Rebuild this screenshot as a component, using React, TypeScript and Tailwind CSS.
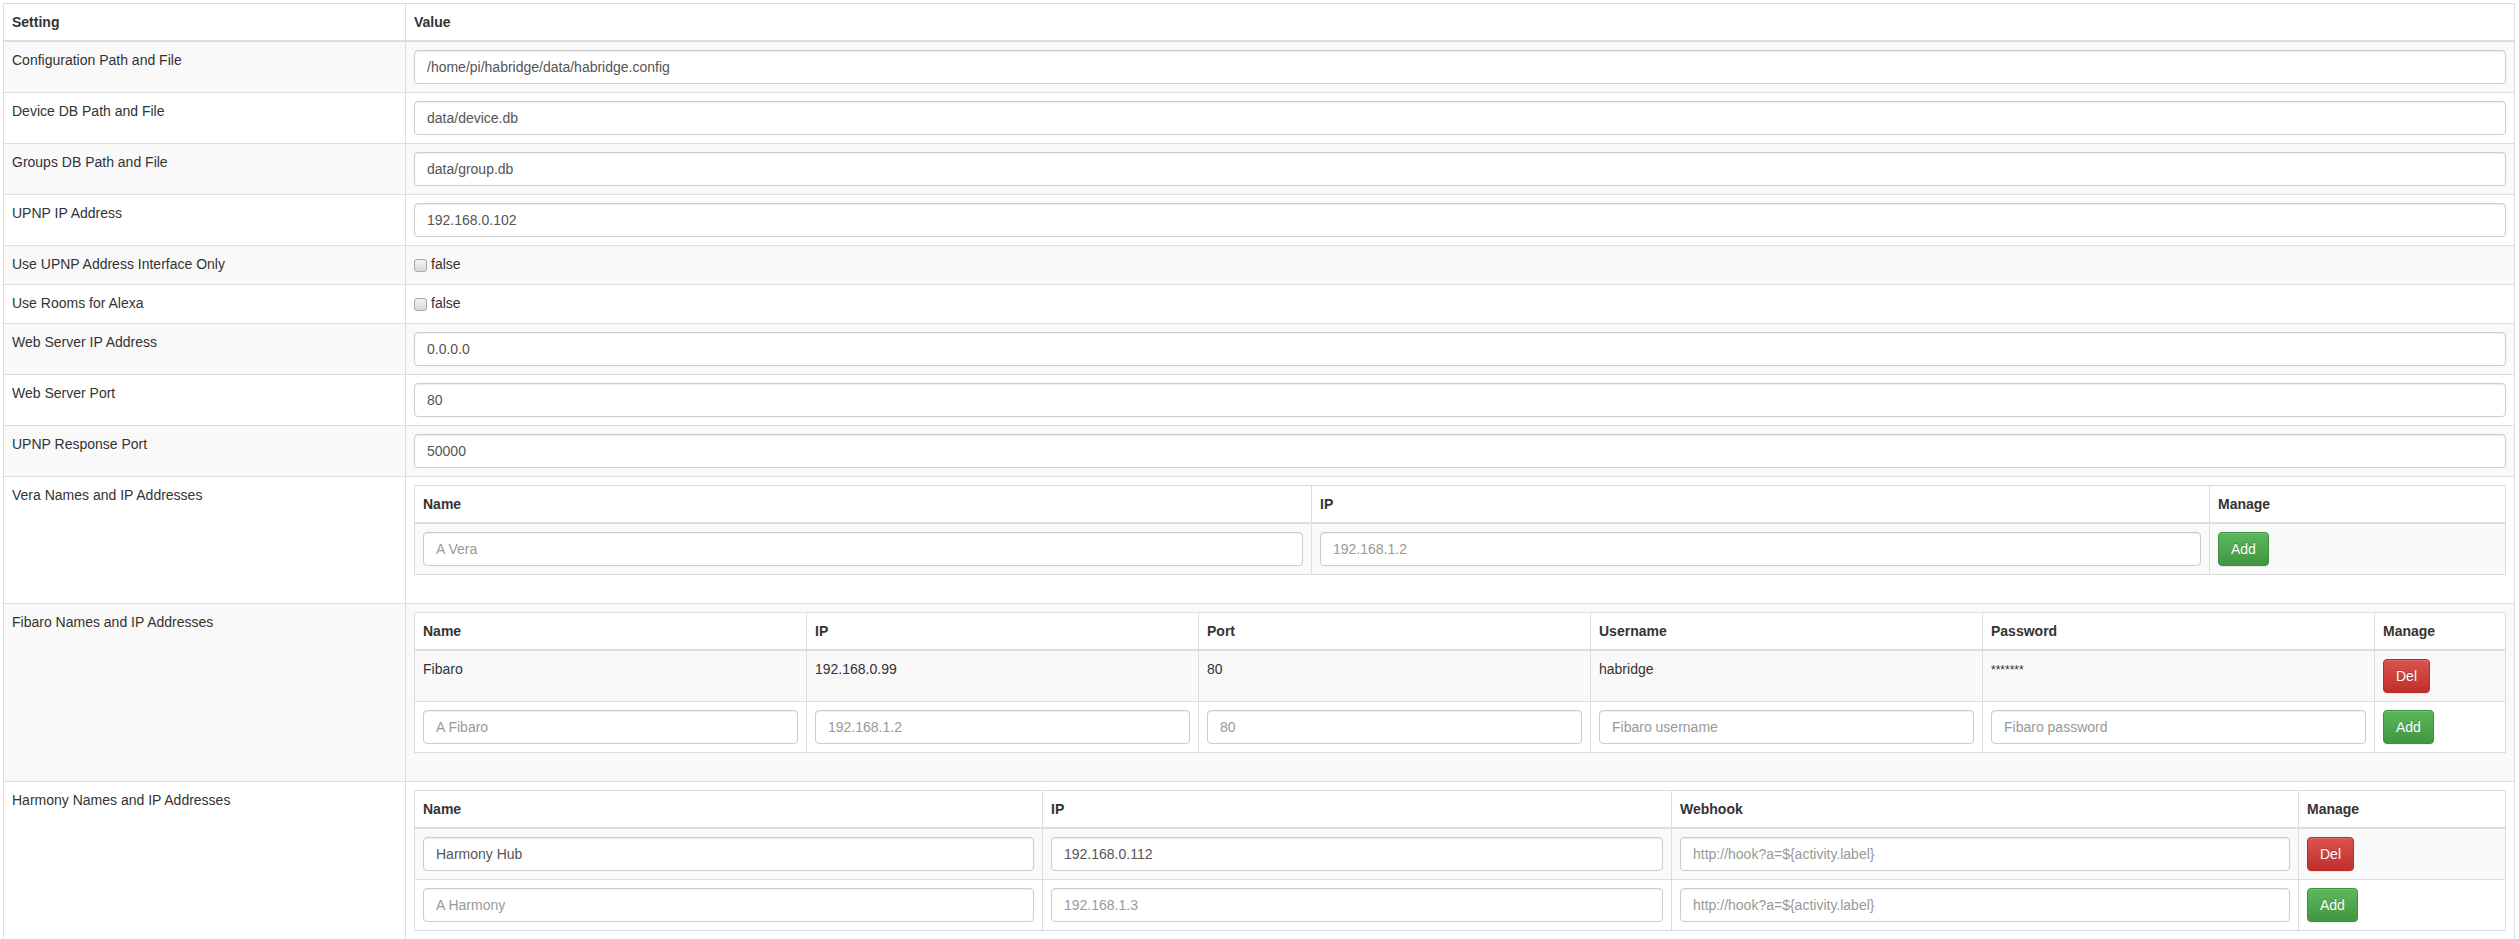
import React from "react";

function TextInput({ value, placeholder }: { value?: string; placeholder?: string }) {
  return (
    <input
      readOnly
      value={value ?? ""}
      placeholder={placeholder}
      className="block w-full h-[34px] px-[12px] py-[6px] text-[14px] leading-[20px] text-[#555] bg-white border border-[#ccc] rounded-[4px] shadow-[inset_0_1px_1px_rgba(0,0,0,0.075)] placeholder:text-[#999] outline-none font-['Liberation_Sans',Arial,sans-serif]"
    />
  );
}

function Btn({ kind, children }: { kind: "add" | "del"; children: React.ReactNode }) {
  const color =
    kind === "add"
      ? "bg-linear-to-b from-[#5cb85c] to-[#419641] border-[#3e8f3e]"
      : "bg-linear-to-b from-[#d9534f] to-[#c12e2a] border-[#b92c28]";
  return (
    <button
      className={`inline-block h-[34px] px-[12px] py-[6px] text-[14px] leading-[20px] text-white border rounded-[4px] [text-shadow:0_-1px_0_rgba(0,0,0,0.2)] shadow-[inset_0_1px_0_rgba(255,255,255,0.15),0_1px_1px_rgba(0,0,0,0.075)] font-['Liberation_Sans',Arial,sans-serif] ${color}`}
    >
      {children}
    </button>
  );
}

function CheckValue() {
  return (
    <div className="flex items-start h-[22px]">
      <span className="mt-[5px] block w-[13px] h-[13px] rounded-[3px] border border-[#a9a9a9] bg-linear-to-b from-[#f4f4f4] to-[#d8d8d8]" />
      <span className="ml-[4px]">false</span>
    </div>
  );
}

const th = "p-[8px] border border-[#ddd] border-b-2 text-left font-bold align-bottom";
const td = "p-[8px] border border-[#ddd] align-top";

function NestedTable({
  cols,
  rows,
}: {
  cols: { name: string; w: string }[];
  rows: React.ReactNode[][];
}) {
  return (
    <table className="w-full table-fixed border-collapse border border-[#ddd] bg-white mb-[20px]">
      <thead>
        <tr className="bg-white">
          {cols.map((c) => (
            <th key={c.name} className={`${th} ${c.w}`}>
              {c.name}
            </th>
          ))}
        </tr>
      </thead>
      <tbody>
        {rows.map((r, i) => (
          <tr key={i} className={i % 2 === 0 ? "bg-[#f9f9f9]" : "bg-white"}>
            {r.map((cell, j) => (
              <td key={j} className={td}>
                {cell}
              </td>
            ))}
          </tr>
        ))}
      </tbody>
    </table>
  );
}

export default function App() {
  const rows: { label: string; value: React.ReactNode }[] = [
    { label: "Configuration Path and File", value: <TextInput value="/home/pi/habridge/data/habridge.config" /> },
    { label: "Device DB Path and File", value: <TextInput value="data/device.db" /> },
    { label: "Groups DB Path and File", value: <TextInput value="data/group.db" /> },
    { label: "UPNP IP Address", value: <TextInput value="192.168.0.102" /> },
    { label: "Use UPNP Address Interface Only", value: <CheckValue /> },
    { label: "Use Rooms for Alexa", value: <CheckValue /> },
    { label: "Web Server IP Address", value: <TextInput value="0.0.0.0" /> },
    { label: "Web Server Port", value: <TextInput value="80" /> },
    { label: "UPNP Response Port", value: <TextInput value="50000" /> },
    {
      label: "Vera Names and IP Addresses",
      value: (
        <NestedTable
          cols={[
            { name: "Name", w: "w-[897px]" },
            { name: "IP", w: "w-[898px]" },
            { name: "Manage", w: "w-[296px]" },
          ]}
          rows={[[<TextInput placeholder="A Vera" />, <TextInput placeholder="192.168.1.2" />, <Btn kind="add">Add</Btn>]]}
        />
      ),
    },
    {
      label: "Fibaro Names and IP Addresses",
      value: (
        <NestedTable
          cols={[
            { name: "Name", w: "w-[392px]" },
            { name: "IP", w: "w-[392px]" },
            { name: "Port", w: "w-[392px]" },
            { name: "Username", w: "w-[392px]" },
            { name: "Password", w: "w-[392px]" },
            { name: "Manage", w: "w-[131px]" },
          ]}
          rows={[
            ["Fibaro", "192.168.0.99", "80", "habridge", <span className="text-[12px]">*******</span>, <Btn kind="del">Del</Btn>],
            [
              <TextInput placeholder="A Fibaro" />,
              <TextInput placeholder="192.168.1.2" />,
              <TextInput placeholder="80" />,
              <TextInput placeholder="Fibaro username" />,
              <TextInput placeholder="Fibaro password" />,
              <Btn kind="add">Add</Btn>,
            ],
          ]}
        />
      ),
    },
    {
      label: "Harmony Names and IP Addresses",
      value: (
        <NestedTable
          cols={[
            { name: "Name", w: "w-[628px]" },
            { name: "IP", w: "w-[629px]" },
            { name: "Webhook", w: "w-[627px]" },
            { name: "Manage", w: "w-[207px]" },
          ]}
          rows={[
            [
              <TextInput value="Harmony Hub" />,
              <TextInput value="192.168.0.112" />,
              <TextInput placeholder="http://hook?a=${activity.label}" />,
              <Btn kind="del">Del</Btn>,
            ],
            [
              <TextInput placeholder="A Harmony" />,
              <TextInput placeholder="192.168.1.3" />,
              <TextInput placeholder="http://hook?a=${activity.label}" />,
              <Btn kind="add">Add</Btn>,
            ],
          ]}
        />
      ),
    },
  ];

  return (
    <div className="bg-white min-h-screen pl-[3px] pt-[3px] font-['Liberation_Sans',Arial,sans-serif] text-[14px] leading-[20px] text-[#333]">
      <table className="w-[2512px] table-fixed border-collapse border border-[#ddd]">
        <thead>
          <tr className="bg-white">
            <th className={`${th} w-[402px]`}>Setting</th>
            <th className={th}>Value</th>
          </tr>
        </thead>
        <tbody>
          {rows.map((r, i) => (
            <tr key={r.label} className={i % 2 === 0 ? "bg-[#f9f9f9]" : "bg-white"}>
              <td className={td}>{r.label}</td>
              <td className={td}>{r.value}</td>
            </tr>
          ))}
        </tbody>
      </table>
    </div>
  );
}
